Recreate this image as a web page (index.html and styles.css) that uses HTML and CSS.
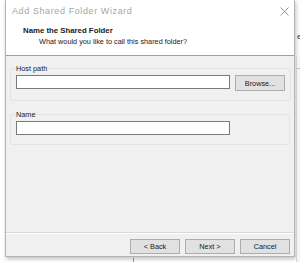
FILE: index.html
```html
<!DOCTYPE html>
<html lang="en">
<head>
  <meta charset="UTF-8">
  <title>Add Shared Folder Wizard</title>
  <link rel="stylesheet" href="styles.css">
</head>
<body>
  <div class="desk">
    <div class="stack">
      <div class="wizard">
        <div class="titlebar">
          <span class="title">Add Shared Folder Wizard</span>
          <svg class="close" width="9" height="9" viewBox="0 0 9 9">
            <path d="M0.5 0.5 L8.5 8.5 M8.5 0.5 L0.5 8.5" stroke="#9a9a9a" stroke-width="1" fill="none"/>
          </svg>
        </div>

        <div class="header">
          <h1>Name the Shared Folder</h1>
          <p>What would you like to call this shared folder?</p>
        </div>

        <div class="content">
          <fieldset class="group">
            <legend>Host path</legend>
            <div class="row">
              <input type="text" class="field">
              <button class="btn browse">Browse...</button>
            </div>
          </fieldset>

          <fieldset class="group">
            <legend>Name</legend>
            <div class="row">
              <input type="text" class="field">
            </div>
          </fieldset>
        </div>

        <div class="footer">
          <button class="btn">&lt; Back</button>
          <button class="btn">Next &gt;</button>
          <button class="btn">Cancel</button>
        </div>
      </div>
      <!-- edge of the window underneath -->
      <div class="below"></div>
    </div>

    <!-- window behind the wizard -->
    <div class="behind">
      <span class="behind-text">er</span>
      <div class="behind-line"></div>
    </div>
  </div>
</body>
</html>
```

FILE: styles.css
```css
body {
  margin: 0;
  background-color: #ffffff;
  font-family: 'Liberation Sans', Arial, sans-serif;
  font-size: 7.3px;
  color: #1a1a1a;
}

.desk {
  display: flex;
  height: 262px;
  overflow: hidden;
}

.stack {
  display: flex;
  flex-direction: column;
}

.wizard {
  margin-left: 5px;
  width: 288px;
  height: 256px;
  border: 1px solid #b4b4b4;
  border-top: none;
  background-color: #f0f0f0;
  display: flex;
  flex-direction: column;
  box-shadow: 1px 2px 4px rgba(0, 0, 0, 0.25);
}

.below {
  flex: 1;
  margin-left: 133px;
  margin-top: 1px;
  border-left: 1px solid #8a8a8a;
}

.titlebar {
  height: 22px;
  flex-shrink: 0;
  background-color: #ffffff;
  display: flex;
  align-items: center;
  justify-content: space-between;
  padding: 0 5px 0 6px;
}

.title {
  color: #a6a6a6;
  font-size: 9px;
  letter-spacing: 0.6px;
}

.header {
  background-color: #ffffff;
  height: 33px;
  flex-shrink: 0;
  padding-left: 17px;
  border-bottom: 1px solid #a0a0a0;
}

.header h1 {
  margin: 4px 0 0;
  font-size: 7.8px;
  font-weight: bold;
}

.header p {
  margin: 2px 0 0 16px;
}

.content {
  flex: 1;
  padding: 8px 4px 0 4px;
  display: flex;
  flex-direction: column;
  gap: 9px;
  border-bottom: 1px solid #d9d9d9;
}

.group {
  margin: 0;
  border: 1px solid #e3e3e3;
  border-radius: 2px;
  padding: 2px 5px 9px 5px;
}

.group legend {
  padding: 0 1px;
  margin-left: -1px;
}

.row {
  display: flex;
  gap: 5px;
  align-items: flex-start;
}

.field {
  width: 214px;
  height: 14px;
  box-sizing: border-box;
  margin: 0;
  border: 1px solid #7a7a7a;
  background-color: #ffffff;
}

.btn {
  box-sizing: border-box;
  margin: 0;
  height: 15px;
  width: 50px;
  padding: 0;
  background-color: #e1e1e1;
  border: 1px solid #adadad;
  font-family: 'Liberation Sans', Arial, sans-serif;
  font-size: 7.3px;
  color: #1a1a1a;
}

.browse {
  height: 16px;
}

.footer {
  height: 23px;
  flex-shrink: 0;
  display: flex;
  justify-content: flex-end;
  align-items: center;
  gap: 5px;
  padding: 2px 4px 0 0;
  box-sizing: border-box;
  border-top: 1px solid #ffffff;
}

.behind {
  flex: 1;
  position: relative;
  border-left: 1px solid #d0d0d0;
  margin-left: 1px;
  margin-top: 56px;
  background-color: #f4f4f4;
}

.behind-text {
  position: absolute;
  left: 0;
  top: -24px;
  font-family: 'Liberation Sans', Arial, sans-serif;
  font-size: 8px;
  color: #333333;
}

.behind-line {
  height: 1px;
  margin-top: 12px;
  background-color: #bcbcbc;
}
```
